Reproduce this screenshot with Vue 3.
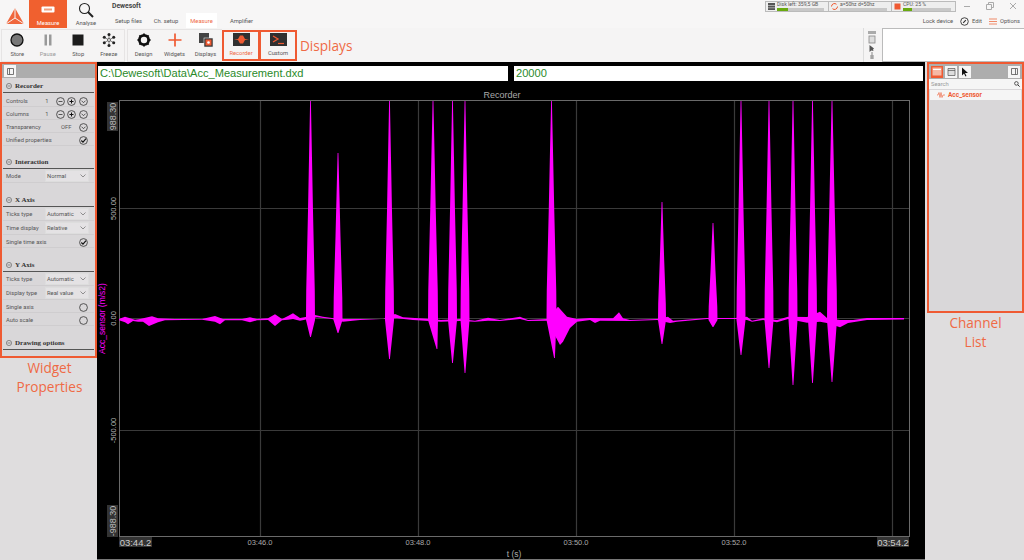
<script setup>
const tools1 = [
  { label: 'Store', icon: 'store' },
  { label: 'Pause', icon: 'pause', muted: true },
  { label: 'Stop', icon: 'stop' },
  { label: 'Freeze', icon: 'freeze' },
]
const tools2 = [
  { label: 'Design', icon: 'design' },
  { label: 'Widgets', icon: 'widgets' },
  { label: 'Displays', icon: 'displays' },
]

const status = [
  { text: 'Disk left: 359,5 GB', icon: 'disk', fill: 24 },
  { text: 'a=50hz d=50hz', icon: 'sync', fill: 0 },
  { text: 'CPU: 25 %', icon: 'cpu', fill: 18 },
]

const sections = [
  {
    title: 'Recorder',
    rows: [
      { label: 'Controls', value: '1', buttons: ['minus', 'plus', 'down'] },
      { label: 'Columns', value: '1', buttons: ['minus', 'plus', 'down'] },
      { label: 'Transparency', value: 'OFF', buttons: ['down'] },
      { label: 'Unified properties', buttons: ['check'] },
    ],
  },
  { title: 'Interaction', rows: [{ label: 'Mode', select: 'Normal' }] },
  {
    title: 'X Axis',
    rows: [
      { label: 'Ticks type', select: 'Automatic' },
      { label: 'Time display', select: 'Relative' },
      { label: 'Single time axis', buttons: ['check'] },
    ],
  },
  {
    title: 'Y Axis',
    rows: [
      { label: 'Ticks type', select: 'Automatic' },
      { label: 'Display type', select: 'Real value' },
      { label: 'Single axis', buttons: ['empty'] },
      { label: 'Auto scale', buttons: ['empty'] },
    ],
  },
  { title: 'Drawing options', rows: [] },
]

const BASE = 319
const spikes = [
  { x: 310.5, top: 101, bot: 337, w: 4.5 },
  { x: 338, top: 153, bot: 333, w: 4.5 },
  { x: 389.5, top: 101, bot: 359, w: 4.5 },
  { x: 433, top: 101, bot: 349, w: 5, shift: 4 },
  { x: 452.5, top: 101, bot: 363, w: 4.5 },
  { x: 465, top: 101, bot: 373, w: 4.5 },
  { x: 551.5, top: 101, bot: 358, w: 5, shift: 3 },
  { x: 662, top: 202, bot: 344, w: 4 },
  { x: 713, top: 223, bot: 327, w: 4.5 },
  { x: 741, top: 101, bot: 355, w: 4.5 },
  { x: 769, top: 101, bot: 368, w: 4.5 },
  { x: 793, top: 101, bot: 385, w: 4.5 },
  { x: 812.5, top: 101, bot: 383, w: 4.5 },
  { x: 832, top: 101, bot: 382, w: 5 },
]

const spikePaths = spikes.map((s) => {
  const h = BASE - s.top
  const p = (f) => (BASE - h * f).toFixed(1)
  const xb = s.x + (s.shift || 0)
  const w = s.w
  return [
    `M${s.x - 0.4} ${s.top}`,
    `L${s.x - w * 0.33} ${p(0.74)}`,
    `L${s.x - w * 0.55} ${p(0.5)}`,
    `L${s.x - w * 0.95} ${p(0.13)}`,
    `L${s.x - w} ${BASE + 1}`,
    `L${xb - 0.4} ${s.bot}`,
    `L${xb + 0.4} ${s.bot}`,
    `L${s.x + w} ${BASE + 1}`,
    `L${s.x + w * 0.95} ${p(0.13)}`,
    `L${s.x + w * 0.55} ${p(0.5)}`,
    `L${s.x + w * 0.33} ${p(0.74)}`,
    `L${s.x + 0.4} ${s.top}`,
    'Z',
  ].join(' ')
})

const upper = [
  [119, 319], [125, 316.7], [130, 318.3], [135, 319.7], [140, 319], [152, 316.3], [158, 318.3], [175, 319],
  [202, 319], [215, 316], [223, 319], [242, 319], [250, 317.3], [257, 319], [268, 318.3], [275, 314.3],
  [282, 319], [288, 316], [293, 313.3], [300, 318], [307, 316.7], [315, 315], [323, 316.7], [332, 318],
  [344, 319], [360, 319], [383, 319], [395, 314], [403, 317.3], [427, 318.7], [441, 320], [460, 319],
  [475, 320.7], [488, 317.7], [500, 320], [520, 316.7], [528, 320], [547, 319], [558, 306.7], [567, 316.7],
  [577, 319], [590, 318], [600, 318.3], [613, 318.3], [619, 312.3], [623, 318.3], [630, 320], [657, 319],
  [668, 316.7], [673, 320.7], [707, 318], [735, 318], [747, 316.7], [752, 320.7], [763, 318.3], [777, 320],
  [788, 316.7], [807, 317], [820, 311.7], [827, 318], [840, 320], [853, 320], [867, 318], [904, 318],
]
const lower = [
  [904, 319.5], [867, 320], [848, 323], [840, 327.3], [827, 323], [820, 321.7], [807, 322.7], [788, 319],
  [777, 322.3], [763, 320], [752, 321.7], [747, 320], [737, 319], [707, 319], [677, 321.7], [670, 323],
  [657, 320], [630, 321], [600, 320.7], [595, 323], [590, 320], [577, 321.7], [570, 328], [563, 341.7],
  [560, 345], [547, 320.7], [528, 321], [520, 319], [500, 321], [488, 320.7], [475, 321.7], [460, 321],
  [441, 321.7], [413, 320], [397, 318.3], [360, 320], [343, 321.7], [332, 319], [317, 317.3], [300, 320.7],
  [293, 319], [288, 319.7], [282, 320.3], [275, 326], [268, 320], [257, 320.3], [250, 322.3], [242, 320.3],
  [225, 320.3], [220, 324.3], [215, 321.7], [202, 319.7], [165, 320.3], [158, 322.3], [149, 326], [143, 321.7],
  [138, 321.7], [133, 321], [128, 324.3], [125, 322.3], [119, 320.3],
]
const basePath = 'M' + [...upper, ...lower].map((p) => p.join(' ')).join(' L') + ' Z'

const gridX = [260, 418, 576, 734, 892]
const gridY = [208, 318, 430]
const ticks = [
  { x: 260, t: '03:46.0' },
  { x: 418, t: '03:48.0' },
  { x: 576, t: '03:50.0' },
  { x: 734, t: '03:52.0' },
]
const midLabels = [
  { y: 208.5, t: '500.00' },
  { y: 318.5, t: '0.00' },
  { y: 430.5, t: '-500.00' },
]
const flakeDots = [
  [8, 2.6], [12.7, 5.3], [12.7, 10.7], [8, 13.4], [3.3, 10.7], [3.3, 5.3],
]
</script>

<template>
  <div class="app">
    <header class="top">
      <div class="logo">
        <svg width="20" height="18" viewBox="0 0 20 18">
          <path d="M10 1 19 17H1Z" fill="#f0663c" />
          <path d="M10 1v10M1 17l9-6 9 6" stroke="#f7f3f1" stroke-width="1" fill="none" />
        </svg>
      </div>
      <div class="tile tile-on">
        <svg width="14" height="7" viewBox="0 0 14 7">
          <rect x="0.5" y="0.5" width="13" height="6" rx="1" fill="#fff" />
          <rect x="3" y="2.5" width="8" height="2" fill="#f0a080" />
        </svg>
        <span>Measure</span>
      </div>
      <div class="tile">
        <svg width="16" height="16" viewBox="0 0 16 16">
          <circle cx="6.5" cy="6.5" r="5" fill="none" stroke="#222" stroke-width="1.1" />
          <path d="M10 10l5 5" stroke="#222" stroke-width="2" />
        </svg>
        <span>Analyse</span>
      </div>
      <div class="title-col">
        <div class="app-title">Dewesoft</div>
        <nav class="tabs">
          <span class="tab t1">Setup files</span>
          <span class="tab t2">Ch. setup</span>
          <span class="tab t3">Measure</span>
          <span class="tab t4">Amplifier</span>
        </nav>
      </div>
      <div class="top-right">
        <div class="status-line">
          <div class="status">
            <div v-for="s in status" :key="s.text" class="cell">
              <svg width="9" height="9" viewBox="0 0 9 9" class="cell-icon">
                <rect v-if="s.icon === 'disk'" x="1" y="1" width="7" height="7" fill="#555" />
                <path v-if="s.icon === 'disk'" d="M1 3.5h7M1 5.8h7" stroke="#ddd" stroke-width=".6" />
                <path v-if="s.icon === 'sync'" d="M1.5 4.5a3 3 0 0 1 5-2.2M7.5 4.5a3 3 0 0 1-5 2.2" fill="none" stroke="#ef5a32" stroke-width="1" />
                <rect v-if="s.icon === 'cpu'" x="1.5" y="1.5" width="6" height="6" fill="#ef5a32" />
              </svg>
              <div class="cell-body">
                <div class="cell-text">{{ s.text }}</div>
                <div class="meter"><div class="meter-fill" :style="{ width: s.fill + '%' }"></div></div>
              </div>
            </div>
          </div>
          <div class="win">
            <svg width="8" height="8" viewBox="0 0 8 8"><path d="M1 4.5h6" stroke="#aaa" /></svg>
            <svg width="8" height="8" viewBox="0 0 8 8"><path d="M.5 2.5h5v5h-5zM2.5 2.5v-2h5v5h-2" fill="none" stroke="#aaa" /></svg>
            <svg width="8" height="8" viewBox="0 0 8 8"><path d="M1 1l6 6M7 1l-6 6" stroke="#aaa" /></svg>
          </div>
        </div>
        <div class="actions">
          <span>Lock device</span>
          <span class="action">
            <svg width="9" height="9" viewBox="0 0 10 10">
              <circle cx="5" cy="5" r="4.2" fill="none" stroke="#333" />
              <path d="M3.5 6.5 6.5 3.5" stroke="#333" stroke-width="1.3" />
            </svg>
            Edit
          </span>
          <span class="action">
            <svg width="8" height="7" viewBox="0 0 8 7"><path d="M0 1h8M0 3.500h8M0 6h8" stroke="#f08a68" stroke-width="1.2" /></svg>
            Options
          </span>
        </div>
      </div>
    </header>

    <section class="toolbar">
      <div class="group g1">
        <div v-for="t in tools1" :key="t.label" class="tool" :class="{ muted: t.muted }">
          <svg width="16" height="16" viewBox="0 0 16 16">
            <circle v-if="t.icon === 'store'" cx="8" cy="8" r="6" fill="#777" stroke="#111" stroke-width="1.3" />
            <path v-if="t.icon === 'pause'" d="M4.500 2.500h2.500v11H4.500zM9 2.500h2.500v11H9z" fill="#999" />
            <rect v-if="t.icon === 'stop'" x="2.500" y="2.500" width="11" height="11" fill="#1c1c1c" />
            <g v-if="t.icon === 'freeze'" fill="#222">
              <path d="M8 2.500v11M3.300 5.300l9.400 5.400M12.700 5.300l-9.400 5.400" stroke="#555" stroke-width=".7" />
              <circle v-for="d in flakeDots" :key="d[0] + '-' + d[1]" :cx="d[0]" :cy="d[1]" r="1.500" />
              <circle cx="8" cy="8" r="1.500" fill="#f5f4f4" stroke="#333" stroke-width=".7" />
            </g>
          </svg>
          <span>{{ t.label }}</span>
        </div>
      </div>
      <div class="group g2">
        <div v-for="t in tools2" :key="t.label" class="tool">
          <svg width="16" height="16" viewBox="0 0 16 16">
            <g v-if="t.icon === 'design'">
              <circle cx="8" cy="8" r="4.600" fill="none" stroke="#111" stroke-width="2.800" />
              <path d="M8 1.500v13M1.500 8h13M3.400 3.400l9.200 9.200M12.600 3.400l-9.200 9.200" stroke="#111" stroke-width="1.800" stroke-dasharray="2.400 8.200 2.400" />
            </g>
            <path v-if="t.icon === 'widgets'" d="M8 1.500v13M1.500 8h13" stroke="#ef5a32" stroke-width="1.700" />
            <g v-if="t.icon === 'displays'">
              <rect x="1" y="1" width="10" height="10" fill="#444" />
              <rect x="6" y="6" width="9" height="9" fill="#333" stroke="#eee" stroke-width=".6" />
              <rect x="7.500" y="7.500" width="6" height="6" fill="#ef5a32" />
              <circle cx="10.500" cy="10.500" r="1.300" fill="#fff" />
            </g>
          </svg>
          <span>{{ t.label }}</span>
        </div>
      </div>
      <div class="tool boxed recorder">
        <svg width="17" height="13" viewBox="0 0 17 13">
          <rect width="17" height="13" fill="#303030" />
          <path d="M1 6.500 5 6 7 2.500h3L12 6l4 .5-4 .5-2 3.500H7L5 7z" fill="#ef5a32" />
        </svg>
        <span>Recorder</span>
      </div>
      <div class="tool boxed">
        <svg width="17" height="13" viewBox="0 0 17 13">
          <rect width="17" height="13" fill="#303030" />
          <path d="M3 3l5 3-5 3" fill="none" stroke="#ef5a32" stroke-width="1.300" />
          <path d="M8 10.500h6" stroke="#ef5a32" stroke-width="1.200" />
        </svg>
        <span>Custom</span>
      </div>
      <div class="annot displays-note">Displays</div>
      <div class="side-tools">
        <svg width="10" height="31" viewBox="0 0 10 31">
          <rect x="1" y="1" width="8" height="3" fill="#aaa" />
          <rect x="2" y="6" width="6" height="7" fill="#ddd" stroke="#888" stroke-width=".8" />
          <path d="M2.500 15v7l1.800-1.600 2.200.6-.5-1.500L7 18.500z" fill="#555" />
          <path d="M5 22v7M3 26h4M3 28h4" stroke="#888" stroke-width="1" fill="none" />
        </svg>
      </div>
      <div class="white-box"></div>
    </section>

    <main class="main">
      <div class="col-left">
        <aside class="panel props">
          <div class="panel-head">
            <span class="head-btn">
              <svg width="7" height="7" viewBox="0 0 7 7"><path d="M.5.500h6v6h-6zM2.500.5v6" fill="none" stroke="#555" stroke-width=".8" /></svg>
            </span>
          </div>
          <div v-for="sec in sections" :key="sec.title" class="sec">
            <div class="sec-head">
              <svg width="6" height="6" viewBox="0 0 6 6"><circle cx="3" cy="3" r="2.600" fill="none" stroke="#555" stroke-width=".6" /><path d="M1.500 3h3" stroke="#555" stroke-width=".6" /></svg>
              {{ sec.title }}
            </div>
            <div v-for="r in sec.rows" :key="r.label" class="row" :class="{ 'row-select': r.select }">
              <span class="row-label">{{ r.label }}</span>
              <span v-if="r.select" class="select">{{ r.select }}
                <svg width="6" height="4" viewBox="0 0 6 4"><path d="M.5.500 3 3 5.500.5" fill="none" stroke="#777" stroke-width=".8" /></svg>
              </span>
              <template v-else>
                <span v-if="r.value" class="row-value">{{ r.value }}</span>
                <span class="btns">
                  <svg v-for="b in r.buttons" :key="b" width="9" height="9" viewBox="0 0 9 9">
                    <circle cx="4.500" cy="4.500" r="3.900" fill="none" stroke="#333" stroke-width=".8" />
                    <path v-if="b === 'minus'" d="M2.500 4.500h4" stroke="#333" stroke-width=".8" />
                    <path v-if="b === 'plus'" d="M2.500 4.500h4M4.500 2.500v4" stroke="#111" stroke-width="1" />
                    <path v-if="b === 'down'" d="M2.500 3.700l2 2 2-2" stroke="#333" stroke-width=".8" fill="none" />
                    <path v-if="b === 'check'" d="M2.300 4.500l1.700 1.700 3-3.500" stroke="#111" stroke-width="1.200" fill="none" />
                  </svg>
                </span>
              </template>
            </div>
          </div>
        </aside>
        <div class="annot note">Widget<br />Properties</div>
      </div>

      <div class="center">
        <div class="paths">
          <div class="field f1">C:\Dewesoft\Data\Acc_Measurement.dxd</div>
          <div class="field f2">20000</div>
        </div>
        <svg class="chart" width="828" height="476" viewBox="97 84 828 476">
          <rect x="97" y="84" width="828" height="476" fill="#000" />
          <path d="M97 559.500H925" stroke="#777" />
          <g stroke="#3a3a3a" stroke-width="1.200">
            <path v-for="x in gridX" :key="x" :d="`M${x + 0.5} 101V537`" />
            <path v-for="y in gridY" :key="y" :d="`M119 ${y + 0.5}H909`" />
          </g>
          <rect x="119.500" y="100.500" width="790" height="436" fill="none" stroke="#6a6a6a" />
          <g fill="#f0f">
            <path :d="basePath" />
            <path v-for="(d, i) in spikePaths" :key="i" :d="d" />
          </g>
          <text x="502" y="98" class="c-title" text-anchor="middle">Recorder</text>

          <rect x="107" y="102" width="11" height="29" fill="#333" />
          <rect x="107" y="505" width="11" height="32" fill="#333" />
          <g class="c-y">
            <text transform="translate(115.500 116.500) rotate(-90)" text-anchor="middle">988.30</text>
            <text transform="translate(115.500 521) rotate(-90)" text-anchor="middle">-988.30</text>
          </g>
          <g class="c-y c-mid">
            <text v-for="m in midLabels" :key="m.t" :transform="`translate(115.500 ${m.y}) rotate(-90)`" text-anchor="middle">{{ m.t }}</text>
          </g>
          <text transform="translate(105 318.500) rotate(-90)" class="c-unit" text-anchor="middle">Acc_sensor (m/s2)</text>

          <rect x="119" y="537" width="33" height="10" fill="#333" />
          <rect x="877" y="537" width="32" height="10" fill="#333" />
          <text x="135.500" y="546" class="c-end" text-anchor="middle">03:44.2</text>
          <text x="893" y="546" class="c-end" text-anchor="middle">03:54.2</text>
          <text v-for="t in ticks" :key="t.t" :x="t.x" y="545" class="c-tick" text-anchor="middle">{{ t.t }}</text>
          <text x="514" y="557" class="c-tick t-axis" text-anchor="middle">t (s)</text>
        </svg>
      </div>

      <div class="col-right">
        <aside class="panel channels">
          <div class="panel-head ch-head">
            <span class="head-btn on">
              <svg width="10" height="9" viewBox="0 0 10 9"><path d="M.5.500h9v8h-9z" fill="#f6b8a4" /><path d="M1 2.500h8" stroke="#fff" /></svg>
            </span>
            <span class="head-btn">
              <svg width="9" height="9" viewBox="0 0 9 9"><path d="M1 1.500h7v7H1z" fill="#ddd" stroke="#555" stroke-width=".7" /><path d="M1 3.500h7" stroke="#555" stroke-width=".7" /></svg>
            </span>
            <span class="head-btn">
              <svg width="8" height="10" viewBox="0 0 8 10"><path d="M1 .5v8l2-2 1.500 3 1-.5L4 6h3z" fill="#111" /></svg>
            </span>
            <span class="head-btn last">
              <svg width="7" height="7" viewBox="0 0 7 7"><path d="M.5.500h6v6h-6zM4.500.5v6" fill="none" stroke="#555" stroke-width=".8" /></svg>
            </span>
          </div>
          <div class="search">
            <span>Search</span>
            <svg width="6" height="6" viewBox="0 0 6 6"><circle cx="2.400" cy="2.400" r="1.800" fill="none" stroke="#333" stroke-width=".8" /><path d="M3.800 3.800 5.600 5.600" stroke="#333" /></svg>
          </div>
          <div class="channel">
            <svg width="9" height="6" viewBox="0 0 9 6"><path d="M0 3h1l1-2.500 1 5 1-5 1 5 1-2.500h2" fill="none" stroke="#ef5a32" stroke-width=".6" /></svg>
            Acc_sensor
          </div>
        </aside>
        <div class="annot note">Channel<br />List</div>
      </div>
    </main>
  </div>
</template>

<style>
html, body { margin: 0; background: #dfddde; }
</style>

<style scoped>
.app {
  width: 1024px;
  height: 560px;
  overflow: hidden;
  background: #dfddde;
  font-family: Roboto, "Noto Sans", sans-serif;
  color: #555;
  font-size: 5.800px;
}
.top {
  height: 28px;
  display: flex;
  background: #f7f6f6;
}
.logo {
  width: 29px;
  display: flex;
  align-items: center;
  justify-content: center;
  padding-top: 3px;
  box-sizing: border-box;
}
.tile {
  width: 38px;
  display: flex;
  flex-direction: column;
  align-items: center;
  justify-content: flex-end;
  gap: 2px;
  padding-bottom: 2px;
  box-sizing: border-box;
  color: #555;
}
.tile-on { background: #f0602f; color: #fff; }
.tile-on svg { margin-bottom: 5px; }
.title-col { margin-left: 7px; width: 200px; }
.app-title { font-weight: 700; font-size: 6.800px; color: #444; margin-top: 2px; height: 11px; }
.tabs { display: flex; height: 15px; }
.tab { display: flex; align-items: center; justify-content: center; box-sizing: border-box; }
.t1 { width: 33px; }
.t2 { width: 34px; margin-left: 4px; }
.t3 { width: 31px; background: #fff; color: #ef6a45; margin-left: 3px; }
.t4 { width: 31px; margin-left: 9px; }
.top-right { margin-left: auto; width: 260px; }
.status-line { display: flex; height: 13px; justify-content: flex-end; padding-top: 1px; box-sizing: border-box; }
.status {
  display: flex;
  background: #eee;
  border: 1px solid #bbb;
  height: 11px;
  box-sizing: border-box;
}
.cell { width: 63px; display: flex; align-items: center; gap: 1px; border-right: 1px solid #bbb; padding-left: 1px; box-sizing: border-box; }
.cell:last-child { border-right: 0; }
.cell-icon { flex: none; }
.cell-body { flex: 1; padding-right: 4px; }
.cell-text { font-size: 5.100px; line-height: 5px; height: 5px; color: #555; white-space: nowrap; }
.meter { height: 2.500px; background: #c8c8c8; margin-top: 1px; }
.meter-fill { height: 100%; background: #6aaa10; }
.win { display: flex; width: 68px; justify-content: space-between; padding: 1px 7px 0 7px; box-sizing: border-box; }
.actions {
  display: flex;
  justify-content: flex-end;
  align-items: center;
  gap: 7px;
  height: 15px;
  padding: 1px 4px 0 0;
  box-sizing: border-box;
}
.action { display: flex; align-items: center; gap: 3px; }
.toolbar {
  height: 34px;
  display: flex;
  background: #f5f4f4;
  padding-left: 1px;
  box-sizing: border-box;
}
.group {
  display: flex;
  border: 1px solid #e6e4e4;
  box-sizing: border-box;
  margin-top: 1px;
}
.g1 { width: 124px; margin-right: 2px; }
.g2 { width: 95px; border-right: 0; }
.tool {
  width: 31px;
  display: flex;
  flex-direction: column;
  align-items: center;
  gap: 2px;
  padding-top: 2px;
  box-sizing: border-box;
  color: #555;
  line-height: 8px;
}
.muted { color: #999; }
.boxed {
  width: 38px;
  height: 31px;
  margin-top: 2px;
  border: 2px solid #ef5a32;
  padding-top: 1px;
  gap: 3px;
}
.boxed + .boxed { margin-left: -1px; }
.recorder { color: #ef6a45; }
.annot {
  font-family: "Open Sans", sans-serif;
  font-size: 13.600px;
  color: #ef6a45;
  line-height: 19px;
  text-align: center;
}
.displays-note { margin-left: 3px; margin-top: 8px; }
.side-tools { margin-left: auto; padding: 2px 2px 0 0; border-left: 1px solid #ddd; width: 19px; box-sizing: border-box; display: flex; justify-content: center; }
.white-box { width: 142px; background: #fff; border: 1px solid #bbb; border-right: 0; box-sizing: border-box; }
.main { display: flex; height: 498px; }
.col-left { width: 97px; flex: none; }
.col-left .note { padding-left: 2px; }
.col-right { width: 97px; flex: none; margin-left: 2px; }
.panel {
  border: 2px solid #ef5a32;
  background: #d9d7d9;
  box-sizing: border-box;
}
.props { width: 97px; height: 296px; overflow: hidden; }
.panel-head { height: 14px; background: #adadad; display: flex; align-items: center; padding-left: 2px; gap: 2px; }
.head-btn { width: 12px; height: 12px; background: #f5f5f5; display: flex; align-items: center; justify-content: center; }
.head-btn.on { background: #ef5a32; }
.head-btn.last { margin-left: auto; margin-right: 2px; }
.sec { margin: 0 1px; padding-bottom: 11px; }
.panel-head + .sec { padding-top: 2px; padding-bottom: 10px; }
.panel-head + .sec .sec-head { margin-bottom: 1px; }
.sec-head {
  height: 12px;
  border-bottom: 1px solid #555;
  display: flex;
  align-items: center;
  gap: 3px;
  padding-left: 3px;
  font-family: "Liberation Serif", serif;
  font-weight: 700;
  font-size: 7px;
  color: #333;
}
.row {
  height: 13px;
  display: flex;
  align-items: center;
  padding: 2px 0 0 3px;
  border-bottom: 1px solid #cfcdcf;
  box-sizing: border-box;
  color: #555;
}
.row-select { height: 14px; padding-top: 0; }
.row-label { flex: 1; white-space: nowrap; }
.row-value { margin-right: 7px; }
.btns { display: flex; gap: 2.500px; padding-right: 6.500px; }
.select {
  width: 44px;
  height: 12px;
  background: #e4e2e4;
  border: 1px solid #ddd;
  box-sizing: border-box;
  display: flex;
  align-items: center;
  justify-content: space-between;
  padding: 0 2px 0 1px;
  margin-right: 5px;
}
.center { width: 828px; flex: none; display: flex; flex-direction: column; }
.paths {
  height: 22px;
  background: #000;
  display: flex;
  gap: 6px;
  padding: 4px 2px 3px 1px;
  box-sizing: border-box;
}
.field {
  background: #fff;
  font-family: "Liberation Sans", sans-serif;
  font-size: 11.100px;
  line-height: 15px;
  color: #2a8a2a;
  padding-left: 2px;
  box-sizing: border-box;
}
.f1 { width: 410px; }
.f2 { width: 409px; }
.chart { display: block; }
.c-title { font: 9px "Liberation Sans", sans-serif; fill: #aaa; }
.c-y text { font: 9px "Liberation Sans", sans-serif; fill: #bbb; }
.c-mid text { font-size: 7.500px; }
.c-unit { font: 8.500px "Liberation Sans", sans-serif; fill: #f0f; }
.c-end { font: 9.500px "Liberation Sans", sans-serif; fill: #ccc; }
.c-tick { font: 7.500px "Liberation Sans", sans-serif; fill: #aaa; }
.t-axis { font-size: 8.500px; }
.channels { width: 97px; height: 251px; }
.ch-head { height: 15px; padding-left: 2px; }
.search {
  height: 10px;
  background: #f5f5f5;
  display: flex;
  align-items: center;
  justify-content: space-between;
  padding: 0 2px;
  color: #999;
  font-size: 5.800px;
}
.channel {
  height: 10px;
  margin: 1px 1px 0;
  background: #f5f5f5;
  display: flex;
  align-items: center;
  gap: 2px;
  padding-left: 7px;
  font-weight: 700;
  font-size: 6.500px;
  color: #ef5a32;
}
</style>
